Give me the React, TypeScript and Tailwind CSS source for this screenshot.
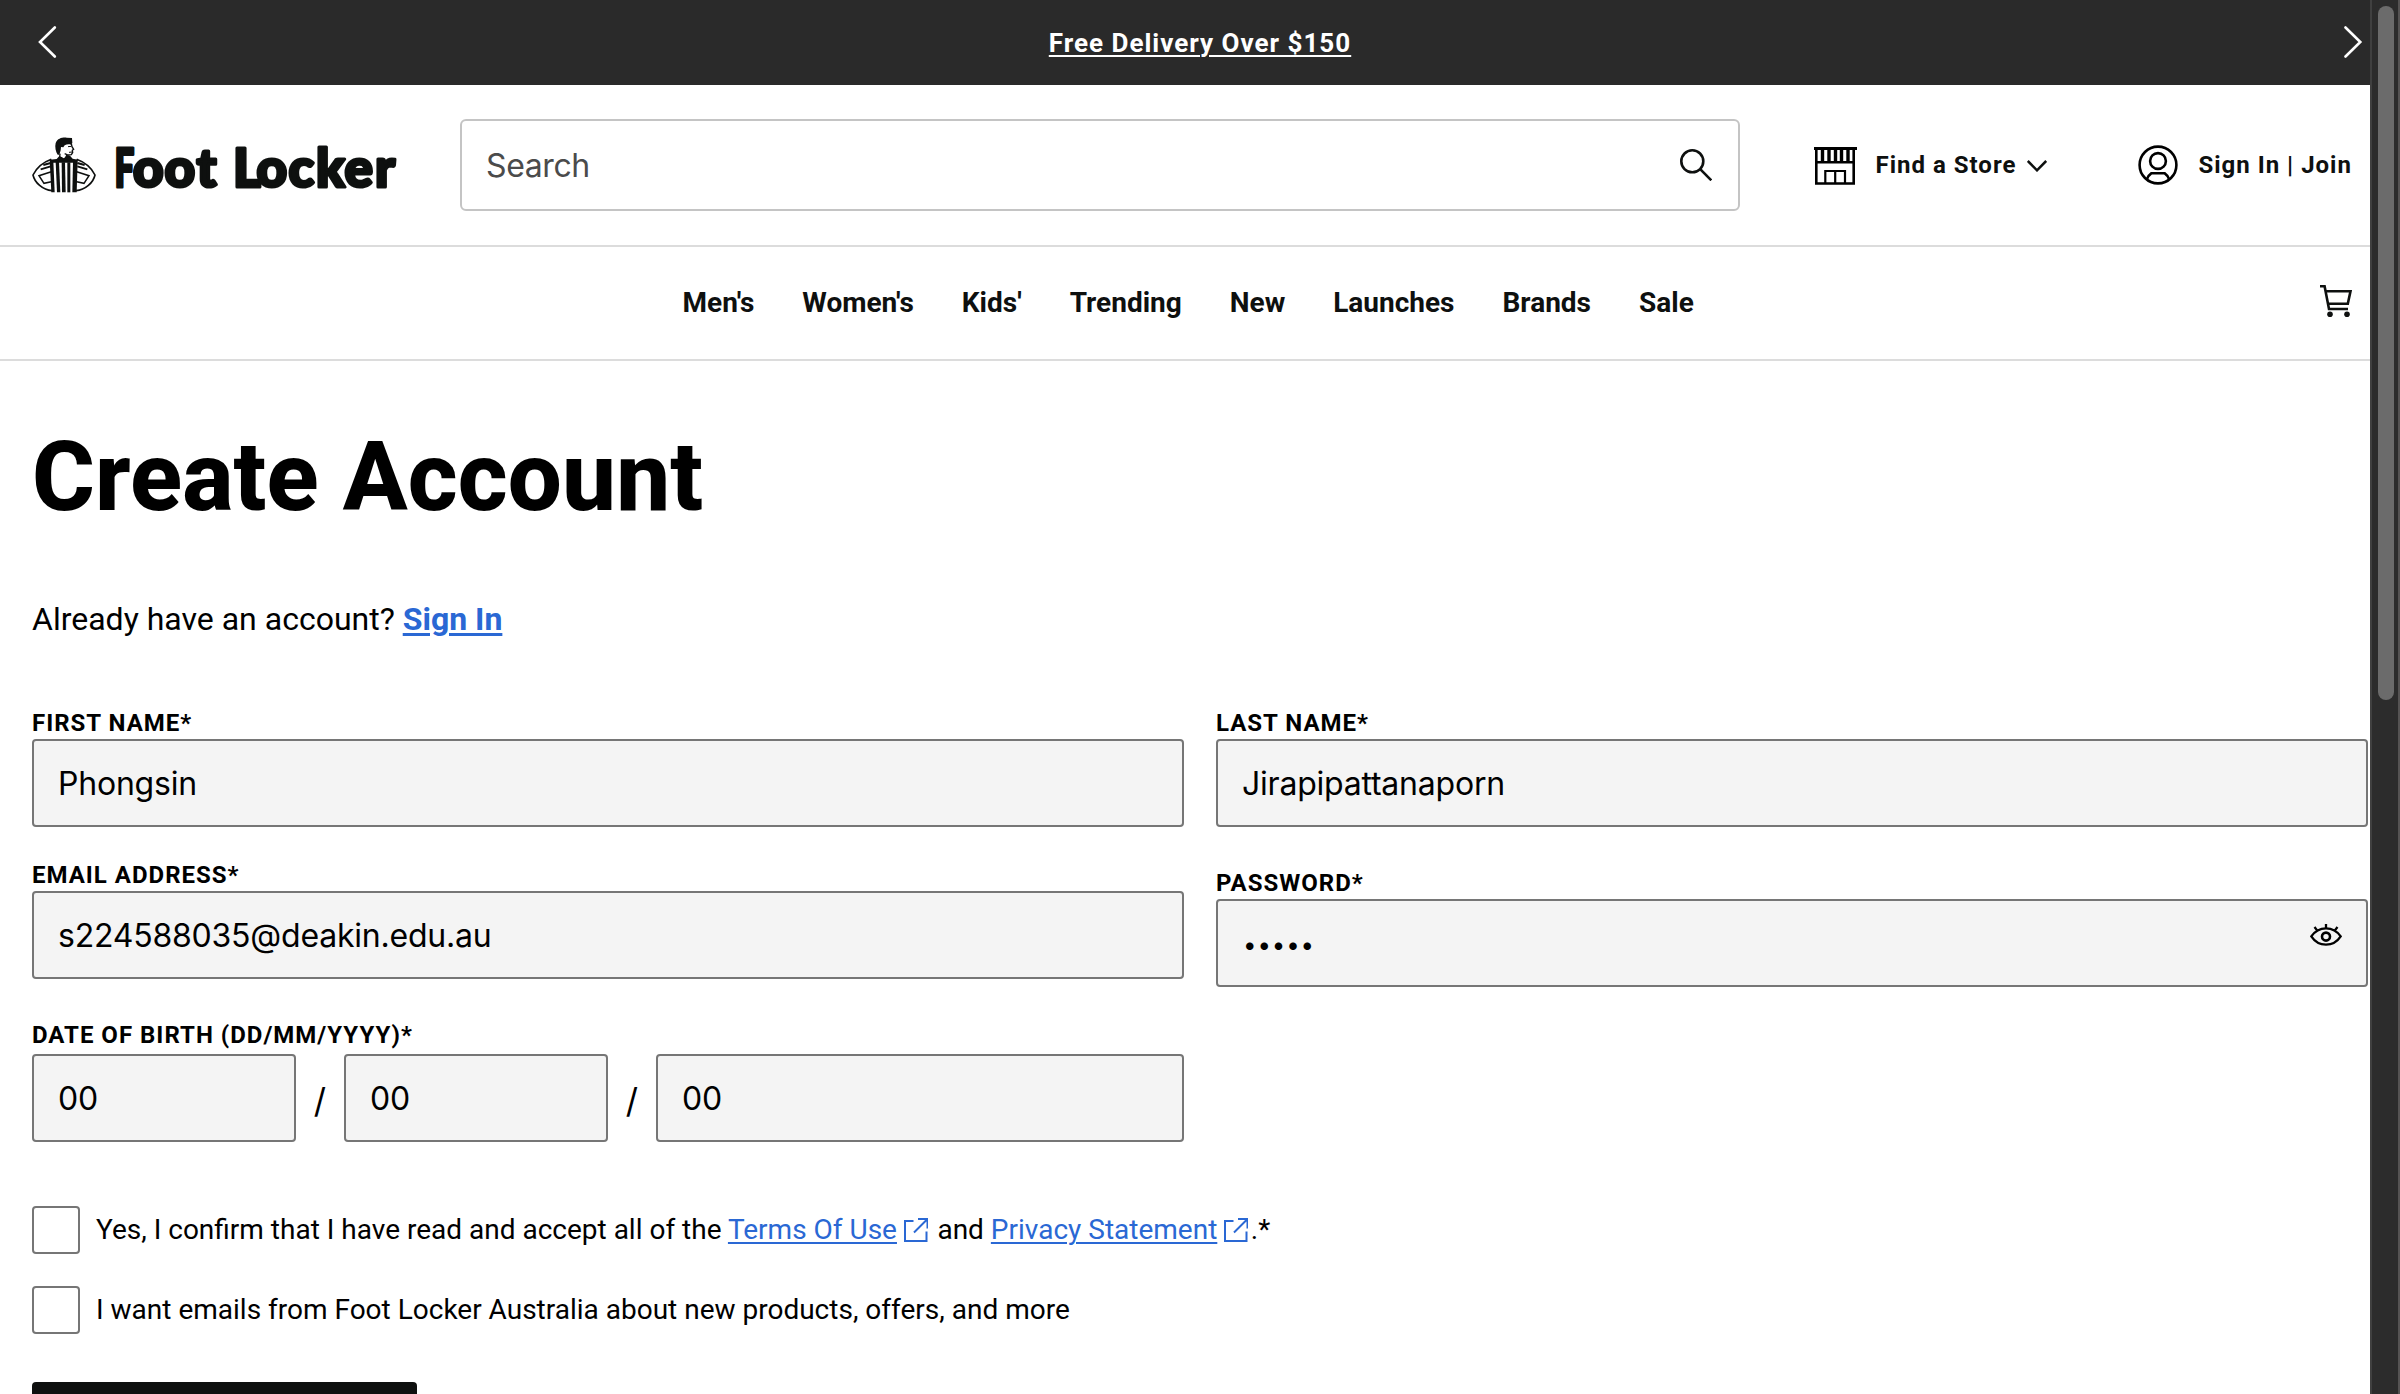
import type { ReactNode } from "react";

const navItems = ["Men's", "Women's", "Kids'", "Trending", "New", "Launches", "Brands", "Sale"];

function RefereeMark() {
  return (
    <svg className="h-14 w-16 shrink-0" viewBox="0 0 192 168" fill="none" stroke="#0e100f" strokeWidth="6">
      {/* head */}
      <path
        d="M77 53C71 44 68 30 71 18C77 4 90 1 104 2L120 3L121 18L117 23C110 20 104 22 98 25L94 31L87 30L86 40L82 53Z"
        fill="#0e100f"
        stroke="none"
      />
      <path d="M118 20L120 29L125 37L121 40L122 47L118 53L108 54L98 50" strokeWidth="4" />
      <path d="M108 29L118 28M111 46L121 45" strokeWidth="3" />
      <path d="M84 50L83 61" strokeWidth="4" />
      {/* collar */}
      <path d="M82 57L74 66L54 68L58 77L134 77L138 68L122 65L114 56L103 53L98 62Z" fill="#0e100f" stroke="none" />
      <path d="M86 58L95 64L100 57L93 52Z" fill="#fff" stroke="none" />
      {/* shirt stripes */}
      <path d="M53 68L64 72L68 166L58 166Z" fill="#0e100f" stroke="none" />
      <path d="M71 74L81 74L85 166L75 166Z" fill="#0e100f" stroke="none" />
      <path d="M89 76L99 76L101 166L90 166Z" fill="#0e100f" stroke="none" />
      <path d="M106 76L115 76L115 166L106 166Z" fill="#0e100f" stroke="none" />
      <path d="M123 74L137 68L134 166L121 166Z" fill="#0e100f" stroke="none" />
      {/* arms */}
      <path d="M58 67C36 75 14 92 3 114C8 137 32 159 60 161" strokeWidth="5" />
      <path d="M134 67C156 75 178 92 189 114C184 137 160 159 132 161" strokeWidth="5" />
      <path d="M58 104L21 116L36 139L58 134" strokeWidth="4.5" />
      <path d="M134 104L171 116L156 139L134 134" strokeWidth="4.5" />
      <path d="M34 84L56 78M26 97L56 88" strokeWidth="6" />
      <path d="M158 84L136 78M166 97L136 88" strokeWidth="6" />
    </svg>
  );
}

function Wordmark() {
  return (
    <svg
      className="h-14 w-[284px] shrink-0 overflow-visible"
      viewBox="114 0 284 56"
      fill="#0e100f"
      stroke="#0e100f"
      strokeWidth="3.2"
      strokeLinejoin="round"
      fontFamily="Lato, sans-serif"
      fontWeight="900"
      fontSize="53"
    >
      <text transform="translate(114.5 49.5) scale(0.66 1)">F</text>
      <text y="49.5" x="133 164.5 196.5 214 233 256.5 288.5 316 344.5 375">oot Locker</text>
    </svg>
  );
}

function StoreIcon() {
  return (
    <svg className="h-[38px] w-[43px]" viewBox="0 0 43 38" fill="none" stroke="#000" strokeWidth="2.6">
      <path d="M0 1.5H43" strokeWidth="3" />
      <path d="M2.3 2V36.5H39.7V2" />
      <path d="M2 15.3H40" strokeWidth="2.4" />
      <path d="M8.5 2V15M15 2V15M21.5 2V15M27.5 2V15M34 2V15" strokeWidth="3.4" />
      <path d="M11.3 36V24H31V36M21.2 24V36" strokeWidth="2.2" />
    </svg>
  );
}

function UserIcon() {
  return (
    <svg className="h-10 w-10" viewBox="0 0 40 40" fill="none" stroke="#000" strokeWidth="2.6">
      <circle cx="20" cy="20" r="18.4" />
      <circle cx="20" cy="16" r="7.9" />
      <path d="M8.8 34.5C10 31.5 11.5 29.5 13.5 28.2H26.5C28.5 29.5 30 31.5 31.2 34.5" />
    </svg>
  );
}

function CartIcon() {
  return (
    <svg className="h-8 w-8" viewBox="0 0 32 32" fill="none" stroke="#0e100f" strokeWidth="2.6">
      <path d="M0 1.3H4.6L9 24H28" />
      <path d="M5.3 6.2H30.5L27.8 18.8H7.8" />
      <circle cx="10" cy="29.2" r="2.8" fill="#0e100f" stroke="none" />
      <circle cx="27" cy="29.2" r="2.8" fill="#0e100f" stroke="none" />
    </svg>
  );
}

function EyeIcon() {
  return (
    <svg className="h-[22px] w-8" viewBox="0 0 32 22" fill="none" stroke="#000" strokeWidth="2.3">
      <path d="M1.3 12.4C8.5 1.6 23.5 1.6 30.7 12.4C23.5 23.4 8.5 23.4 1.3 12.4Z" />
      <circle cx="16" cy="12.6" r="4" strokeWidth="2.6" />
      <path d="M16 0V4.5M4.5 3L7.3 6.6M27.5 3L24.7 6.6" />
    </svg>
  );
}

function ExternalIcon() {
  return (
    <svg className="ml-[7px] mr-[2.5px] inline-block h-6 w-6 align-[-3px]" viewBox="0 0 24 24" fill="none" stroke="#2a68d4" strokeWidth="2">
      <path d="M9.5 3H1V23H22.5V13.5" />
      <path d="M14 1H23.5V10.5M23 1.5L10 14.5" />
    </svg>
  );
}

function Field({ label, className, children }: { label: string; className: string; children: ReactNode }) {
  return (
    <div className={className}>
      <div className="text-2xl leading-6 font-bold tracking-[1px] whitespace-nowrap">{label}</div>
      {children}
    </div>
  );
}

const box =
  "flex h-[88px] items-center rounded-[4px] border-2 border-[#767676] bg-[#f4f4f4] px-6 pt-0.5 font-['Inter'] text-[32px] tracking-[-0.22px]";

function Slash() {
  return <span className="w-12 pt-1 text-center font-['Inter'] text-[34px]">/</span>;
}

function Checkbox({ children }: { children: ReactNode }) {
  return (
    <label className="flex h-12 items-center">
      <span className="size-12 shrink-0 rounded-[4px] border-2 border-[#767676] bg-white" />
      <span className="ml-4 text-[28px] leading-[46px] whitespace-nowrap">{children}</span>
    </label>
  );
}

export default function App() {
  return (
    <div className="flex h-[1394px] w-[2400px] overflow-hidden bg-white font-['Roboto'] text-black">
      <div className="w-[2370px] shrink-0">
        <div className="flex h-[85px] items-center justify-between bg-[#2a2a2a] pr-[7px] pl-[37px]">
          <svg className="mb-px h-8 w-5" viewBox="0 0 20 32" fill="none" stroke="#fff" strokeWidth="2.6" strokeLinecap="round">
            <path d="M17.8 1.5L3 16L17.8 30.5" />
          </svg>
          <a className="text-[26px] leading-8 font-bold tracking-[1px] text-white underline decoration-2 underline-offset-[3px]">
            Free Delivery Over $150
          </a>
          <svg className="mb-px h-8 w-5" viewBox="0 0 20 32" fill="none" stroke="#fff" strokeWidth="2.6" strokeLinecap="round">
            <path d="M2.5 1.5L17.3 16L2.5 30.5" />
          </svg>
        </div>

        <header className="flex h-[162px] items-center border-b-2 border-[#dcdcdc] pl-8 text-[#0e100f]">
          <RefereeMark />
          <div className="ml-[18px]">
            <Wordmark />
          </div>
          <div className="ml-[62px] flex h-[92px] w-[1280px] items-center justify-between rounded-[6px] border-2 border-[#c4c4c4] pr-[26px] pl-6">
            <span className="pt-0.5 font-['Inter'] text-[32px] tracking-[-0.4px] text-[#4b4b4b]">Search</span>
            <svg className="h-8 w-8" viewBox="0 0 32 32" fill="none" stroke="#0e100f" strokeWidth="2.6">
              <circle cx="12.3" cy="12.3" r="11" />
              <path d="M20.2 20.2L31.3 31.3" />
            </svg>
          </div>
          <div className="ml-[74px] flex items-center pt-0.5">
            <StoreIcon />
            <span className="mb-0.5 ml-[18.5px] text-2xl font-bold tracking-[1px] whitespace-nowrap">Find a Store</span>
            <svg className="ml-[11px] h-3 w-5" viewBox="0 0 20 12" fill="none" stroke="#0e100f" strokeWidth="2.5">
              <path d="M0.8 1L10 10.3L19.2 1" />
            </svg>
          </div>
          <div className="ml-[90.5px] flex items-center">
            <UserIcon />
            <span className="ml-[20.5px] text-2xl font-bold tracking-[1px] whitespace-nowrap">Sign In | Join</span>
          </div>
        </header>

        <nav className="flex h-[114px] items-center border-b-2 border-[#dcdcdc] pl-[682.5px] text-[#0e100f]">
          <div className="flex gap-12 text-[28px] font-bold">
            {navItems.map((item) => (
              <a key={item}>{item}</a>
            ))}
          </div>
          <div className="mr-[18px] mb-[4px] ml-auto">
            <CartIcon />
          </div>
        </nav>

        <main className="pl-8">
          <h1 className="pt-[60px] text-[96px] leading-[112px] font-extrabold tracking-[0.12px]">Create Account</h1>
          <p className="mt-[62px] text-[32px] leading-[48px]">
            Already have an account?{" "}
            <a className="font-bold text-[#2a68d4] underline decoration-[3px] underline-offset-[3px]">Sign In</a>
          </p>

          <div className="mt-[68px] flex gap-8">
            <div className="w-[1152px]">
              <Field label="FIRST NAME*" className="">
                <div className={`mt-1 ${box}`}>Phongsin</div>
              </Field>
              <Field label="EMAIL ADDRESS*" className="mt-9">
                <div className={`mt-1 ${box}`}>s224588035@deakin.edu.au</div>
              </Field>
              <Field label="DATE OF BIRTH (DD/MM/YYYY)*" className="mt-11">
                <div className="mt-[7px] flex items-center">
                  <div className={`w-[264px] ${box}`}>00</div>
                  <Slash />
                  <div className={`w-[264px] ${box}`}>00</div>
                  <Slash />
                  <div className={`w-[528px] ${box}`}>00</div>
                </div>
              </Field>
            </div>
            <div className="w-[1152px]">
              <Field label="LAST NAME*" className="">
                <div className={`mt-1 ${box}`}>Jirapipattanaporn</div>
              </Field>
              <Field label="PASSWORD*" className="mt-11">
                <div className={`mt-1 justify-between ${box}`}>
                  <span className="ml-px pt-0.5 text-[24px] tracking-[0.9px]">•••••</span>
                  <span className="mb-[18px]">
                    <EyeIcon />
                  </span>
                </div>
              </Field>
            </div>
          </div>

          <div className="mt-16 flex flex-col gap-8">
            <Checkbox>
              Yes, I confirm that I have read and accept all of the{" "}
              <a className="text-[#2a68d4] underline decoration-2 underline-offset-[3px]">Terms Of Use</a>
              <ExternalIcon /> and{" "}
              <a className="text-[#2a68d4] underline decoration-2 underline-offset-[3px]">Privacy Statement</a>
              <ExternalIcon />.*
            </Checkbox>
            <Checkbox>I want emails from Foot Locker Australia about new products, offers, and more</Checkbox>
          </div>
          <div className="mt-12 h-24 w-[385px] rounded-[4px] bg-[#0e100f]" />
        </main>
      </div>

      <div className="w-[30px] shrink-0 border-r-2 border-l-2 border-r-[#555353] border-l-[#404040] bg-[#2c2c2c] pt-1.5 pl-1.5">
        <div className="h-[694px] w-4 rounded-full bg-[#6b6b6b]" />
      </div>
    </div>
  );
}
